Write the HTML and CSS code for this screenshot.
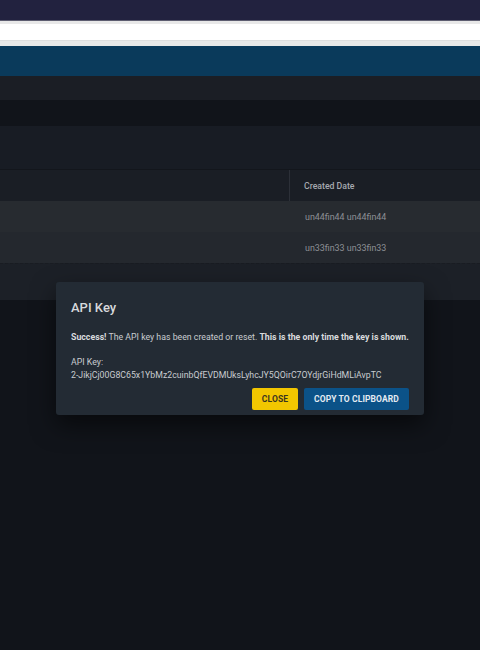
FILE: index.html
```html
<!DOCTYPE html>
<html>
<head>
<meta charset="utf-8">
<link rel="stylesheet" href="styles.css">
</head>
<body>
<div class="topbar"></div>
<div class="urlbar"><div class="url"></div></div>
<div class="nav"></div>
<div class="sub"></div>
<div class="gap"></div>
<div class="panel">
  <div class="toolbar"></div>
  <div class="thead">
    <div class="cell main"></div>
    <div class="cell date">Created Date</div>
  </div>
  <div class="row r1">
    <div class="cell main"></div>
    <div class="cell date">un44fin44 un44fin44</div>
  </div>
  <div class="row r2">
    <div class="cell main"></div>
    <div class="cell date">un33fin33 un33fin33</div>
  </div>
  <div class="tfoot"></div>
</div>

<div class="modal">
  <h2 class="title">API Key</h2>
  <p class="msg"><b>Success!</b> The API key has been created or reset. <b>This is the only time the key is shown.</b></p>
  <p class="key">API Key:<br>2-JikjCj00G8C65x1YbMz2cuinbQfEVDMUksLyhcJY5QOirC7OYdjrGiHdMLiAvpTC</p>
  <div class="actions">
    <button class="btn close">CLOSE</button>
    <button class="btn copy">COPY TO CLIPBOARD</button>
  </div>
</div>
</body>
</html>
```
FILE: styles.css
```css
* { box-sizing: border-box; }
html, body { margin: 0; padding: 0; }
body {
  background: #11141a;
  font-family: Roboto, "Liberation Sans", sans-serif;
  width: 480px;
  height: 650px;
  overflow: hidden;
  position: relative;
}
.topbar { height: 21px; background: #22223f; border-bottom: 1px solid #5d5d70; }
.urlbar { height: 25px; background: #e8e8e8; padding: 3px 0 5px; }
.url { height: 17px; background: #ffffff; border-bottom: 1px solid #dedede; }
.nav { height: 30px; background: #0a3a5b; }
.sub { height: 24px; background: #1b1e25; }
.gap { height: 26px; background: #11141a; }
.panel { background: #181c24; }
.toolbar { height: 44px; border-bottom: 1px solid #13161c; }
.thead, .row { display: flex; height: 31px; }
.thead { background: #1a1e25; }
.r1 { background: #272b30; }
.r2 { background: #24282e; }
.cell { display: flex; align-items: center; font-size: 8.9px; }
.main { width: 290px; }
.thead .main { border-right: 1px solid #2c3038; }
.date { padding-left: 15px; color: #8d9095; }
.thead .date { color: #a7aab0; font-weight: 500; padding-left: 14px; font-size: 8.7px; }
.tfoot { height: 37px; background: #1c2027; border-top: 1px dashed #191c22; }

.modal {
  position: absolute;
  left: 56px;
  top: 282px;
  width: 368px;
  height: 133px;
  background: #232b34;
  border-radius: 3px;
  box-shadow: 0 10px 24px rgba(0,0,0,0.55);
  padding: 17px 15px 0;
  color: #d6d8db;
}
.title { margin: 0; font-size: 13px; font-weight: 500; line-height: 17px; color: #d7d9dc; }
.msg { margin: 15px 0 0; font-size: 8.75px; line-height: 12px; color: #c9ccd0; white-space: nowrap; }
.msg b { font-weight: 700; color: #d9dbde; }
.key { margin: 13px 0 0; font-size: 8.75px; line-height: 13px; color: #c9ccd0; white-space: nowrap; }
.actions { display: flex; justify-content: flex-end; gap: 6px; margin-top: 6px; }
.btn {
  font-family: Roboto, "Liberation Sans", sans-serif;
  border: 0;
  border-radius: 2px;
  height: 22px;
  font-size: 8.5px;
  font-weight: 700;
  padding: 0;
  letter-spacing: 0.1px;
}
.close { width: 46px; background: #f2c600; color: #3a3420; }
.copy { width: 105px; background: #0b5288; color: #e4ebf2; }
```
